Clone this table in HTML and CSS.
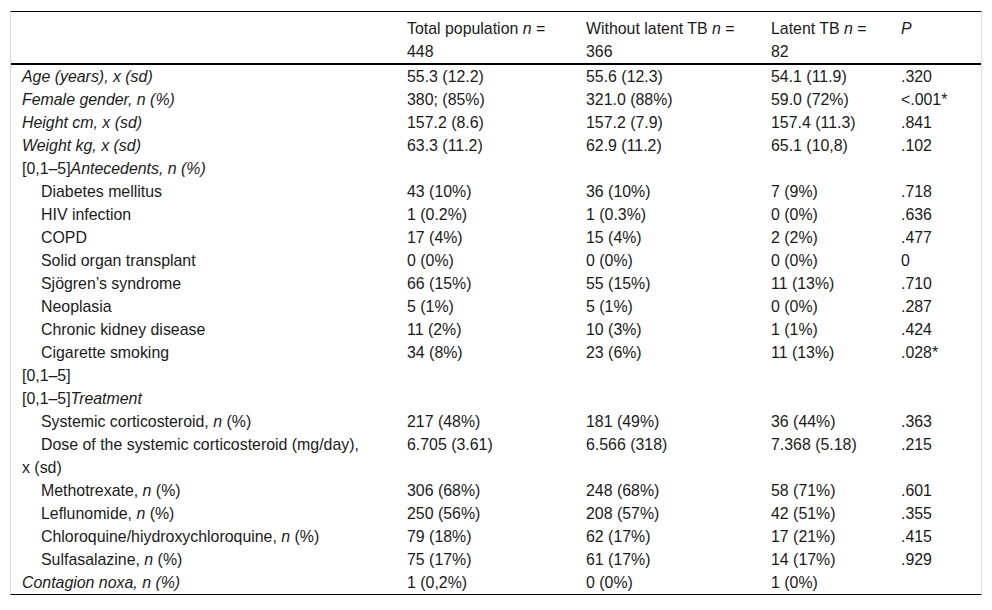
FILE: index.html
```html
<!DOCTYPE html>
<html>
<head>
<meta charset="utf-8">
<link rel="stylesheet" href="styles.css">
</head>
<body>
<div class="wrap">
<table class="tbl">
<colgroup>
<col class="c1"><col class="c2"><col class="c3"><col class="c4"><col class="c5">
</colgroup>
<thead>
<tr>
<th class="first"></th>
<th>Total population <i>n</i> =<br>448</th>
<th>Without latent TB <i>n</i> =<br>366</th>
<th>Latent TB <i>n</i> =<br>82</th>
<th><i>P</i></th>
</tr>
</thead>
<tbody>
<tr><td class="first"><i>Age (years), x (sd)</i></td><td>55.3 (12.2)</td><td>55.6 (12.3)</td><td>54.1 (11.9)</td><td>.320</td></tr>
<tr><td class="first"><i>Female gender, n (%)</i></td><td>380; (85%)</td><td>321.0 (88%)</td><td>59.0 (72%)</td><td>&lt;.001*</td></tr>
<tr><td class="first"><i>Height cm, x (sd)</i></td><td>157.2 (8.6)</td><td>157.2 (7.9)</td><td>157.4 (11.3)</td><td>.841</td></tr>
<tr><td class="first"><i>Weight kg, x (sd)</i></td><td>63.3 (11.2)</td><td>62.9 (11.2)</td><td>65.1 (10,8)</td><td>.102</td></tr>
<tr><td class="first">[0,1–5]<i>Antecedents, n (%)</i></td><td></td><td></td><td></td><td></td></tr>
<tr><td class="first ind">Diabetes mellitus</td><td>43 (10%)</td><td>36 (10%)</td><td>7 (9%)</td><td>.718</td></tr>
<tr><td class="first ind">HIV infection</td><td>1 (0.2%)</td><td>1 (0.3%)</td><td>0 (0%)</td><td>.636</td></tr>
<tr><td class="first ind">COPD</td><td>17 (4%)</td><td>15 (4%)</td><td>2 (2%)</td><td>.477</td></tr>
<tr><td class="first ind">Solid organ transplant</td><td>0 (0%)</td><td>0 (0%)</td><td>0 (0%)</td><td>0</td></tr>
<tr><td class="first ind">Sjögren’s syndrome</td><td>66 (15%)</td><td>55 (15%)</td><td>11 (13%)</td><td>.710</td></tr>
<tr><td class="first ind">Neoplasia</td><td>5 (1%)</td><td>5 (1%)</td><td>0 (0%)</td><td>.287</td></tr>
<tr><td class="first ind">Chronic kidney disease</td><td>11 (2%)</td><td>10 (3%)</td><td>1 (1%)</td><td>.424</td></tr>
<tr><td class="first ind">Cigarette smoking</td><td>34 (8%)</td><td>23 (6%)</td><td>11 (13%)</td><td>.028*</td></tr>
<tr><td class="first">[0,1–5]</td><td></td><td></td><td></td><td></td></tr>
<tr><td class="first">[0,1–5]<i>Treatment</i></td><td></td><td></td><td></td><td></td></tr>
<tr><td class="first ind">Systemic corticosteroid, <i>n</i> (%)</td><td>217 (48%)</td><td>181 (49%)</td><td>36 (44%)</td><td>.363</td></tr>
<tr><td class="first ind">Dose of the systemic corticosteroid (mg/day),<br>x (sd)</td><td>6.705 (3.61)</td><td>6.566 (318)</td><td>7.368 (5.18)</td><td>.215</td></tr>
<tr><td class="first ind">Methotrexate, <i>n</i> (%)</td><td>306 (68%)</td><td>248 (68%)</td><td>58 (71%)</td><td>.601</td></tr>
<tr><td class="first ind">Leflunomide, <i>n</i> (%)</td><td>250 (56%)</td><td>208 (57%)</td><td>42 (51%)</td><td>.355</td></tr>
<tr><td class="first ind">Chloroquine/hiydroxychloroquine, <i>n</i> (%)</td><td>79 (18%)</td><td>62 (17%)</td><td>17 (21%)</td><td>.415</td></tr>
<tr><td class="first ind">Sulfasalazine, <i>n</i> (%)</td><td>75 (17%)</td><td>61 (17%)</td><td>14 (17%)</td><td>.929</td></tr>
<tr><td class="first"><i>Contagion noxa, n (%)</i></td><td>1 (0,2%)</td><td>0 (0%)</td><td>1 (0%)</td><td></td></tr>
</tbody>
</table>
</div>
</body>
</html>
```

FILE: styles.css
```css
html, body {
  margin: 0;
  padding: 0;
  background: #fff;
}

.wrap {
  padding: 11px 10px;
}

.tbl {
  width: 972px;
  table-layout: fixed;
  border-collapse: separate;
  border-spacing: 0;
  border-left: 1px solid #dcdcdc;
  border-right: 1px solid #e4e4e4;
  border-top: 1px solid #000;
  border-bottom: 1px solid #000;
  font-family: "Liberation Sans", Arial, sans-serif;
  font-size: 15.9px;
  color: #1a1a1a;
}

.c1 { width: 384px; }
.c2 { width: 179px; }
.c3 { width: 185px; }
.c4 { width: 130px; }
.c5 { width: 92px; }

.tbl th {
  font-weight: normal;
  text-align: left;
  vertical-align: top;
  line-height: 23px;
  padding: 5px 12px 0 12px;
  border-bottom: 2px solid #000;
}

.tbl td {
  text-align: left;
  vertical-align: top;
  line-height: 23px;
  padding: 0 12px;
}

.tbl .first {
  padding-left: 11px;
}

.tbl .ind {
  text-indent: 19px;
}
```
